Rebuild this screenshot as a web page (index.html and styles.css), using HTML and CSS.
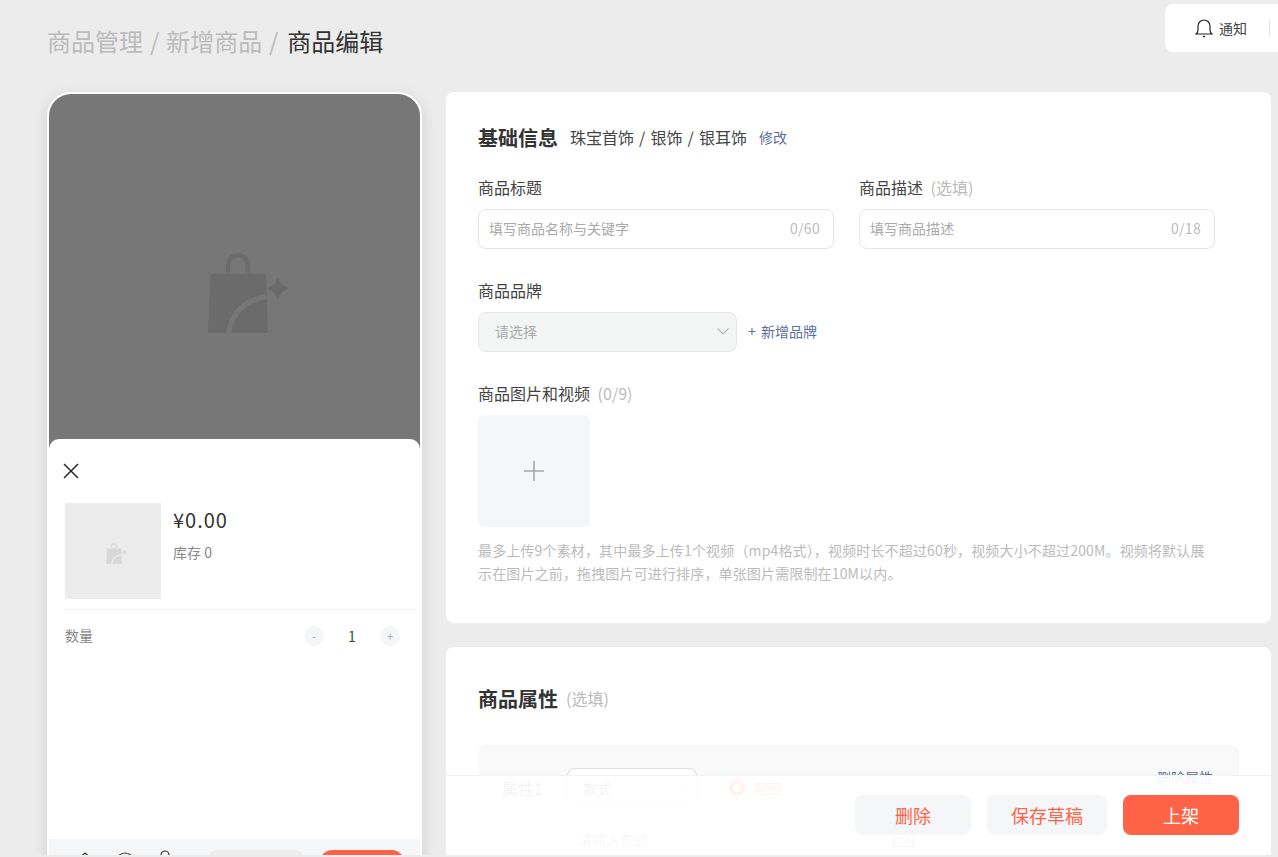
FILE: index.html
```html
<!DOCTYPE html>
<html lang="zh-CN">
<head>
  <meta charset="UTF-8">
  <meta name="viewport" content="width=device-width, initial-scale=1.0">
  <title>商品编辑</title>
  <link rel="stylesheet" href="styles.css">
</head>
<body>
  <svg class="defs" width="0" height="0">
    <symbol id="bag" viewBox="0 0 80 80">
      <path class="bag-fill" d="M18 21v-8a12.500 12.500 0 0 1 25 0v8h-5.500v-8a7 7 0 0 0-14 0v8z"/>
      <path class="bag-fill" d="M6 21h50a3 3 0 0 1 3 3l1.500 54a3 3 0 0 1-3 3H3.500a3 3 0 0 1-3-3L3 24a3 3 0 0 1 3-3z"/>
      <path class="bag-cut" d="M21 83c2-24 18-36 38-39"/>
      <path class="bag-star" d="M70 27q2 7 9 9q-7 2-9 9q-2-7-9-9q7-2 9-9z"/>
    </symbol>
  </svg>

  <div class="page">
    <!-- Breadcrumb -->
    <div class="crumbs">商品管理 / 新增商品 / <span class="crumbs-current">商品编辑</span></div>

    <div class="columns">
      <!-- Phone preview -->
      <div class="phone">
        <div class="phone-image">
          <svg class="bag-big"><use href="#bag"/></svg>
        </div>
        <div class="sheet">
          <svg class="close-icon" width="16" height="16" viewBox="0 0 16 16" fill="none" stroke="#222" stroke-width="1.400">
            <line x1="1" y1="1" x2="15" y2="15"></line>
            <line x1="15" y1="1" x2="1" y2="15"></line>
          </svg>
          <div class="sku">
            <div class="sku-thumb">
              <svg class="bag-small"><use href="#bag"/></svg>
            </div>
            <div>
              <div class="sku-price">¥0.00</div>
              <div class="sku-stock">库存 0</div>
            </div>
          </div>
          <div class="qty">
            <span class="qty-label">数量</span>
            <div class="qty-stepper">
              <span class="qty-btn">-</span>
              <span class="qty-value">1</span>
              <span class="qty-btn">+</span>
            </div>
          </div>
        </div>
        <div class="phone-bar">
          <svg class="bar-icons" width="96" height="16" viewBox="0 0 96 16" fill="none" stroke="#333" stroke-width="1.200">
            <path d="M0 11 8 4l8 7"/>
            <circle cx="48" cy="13" r="9"/>
            <circle cx="88" cy="6" r="4"/>
          </svg>
          <span class="bar-pill"></span>
          <span class="bar-buy"></span>
        </div>
      </div>

      <!-- Form cards -->
      <div class="cards">
        <section class="card card-basic">
          <div class="card-head">
            <h2 class="card-title">基础信息</h2>
            <span class="cat-path">珠宝首饰 / 银饰 / 银耳饰</span>
            <a class="link-edit">修改</a>
          </div>

          <div class="field-row">
            <div class="field">
              <div class="field-label">商品标题</div>
              <div class="input">
                <span>填写商品名称与关键字</span>
                <span class="input-count">0/60</span>
              </div>
            </div>
            <div class="field">
              <div class="field-label">商品描述 <span class="optional">(选填)</span></div>
              <div class="input">
                <span>填写商品描述</span>
                <span class="input-count">0/18</span>
              </div>
            </div>
          </div>

          <div class="field field-brand">
            <div class="field-label">商品品牌</div>
            <div class="brand-row">
              <div class="select-box">
                <span>请选择</span>
                <svg width="12" height="7" viewBox="0 0 12 7" fill="none" stroke="#b5b5b5" stroke-width="1.100">
                  <path d="M.5.5 6 6 11.500.5"/>
                </svg>
              </div>
              <a class="link-add">+ 新增品牌</a>
            </div>
          </div>

          <div class="field field-media">
            <div class="field-label">商品图片和视频 <span class="optional">(0/9)</span></div>
            <div class="upload">
              <svg width="22" height="22" viewBox="0 0 22 22" stroke="#999" stroke-width="1.300">
                <line x1="11" y1="1" x2="11" y2="21"></line>
                <line x1="1" y1="11" x2="21" y2="11"></line>
              </svg>
            </div>
            <p class="help">最多上传9个素材，其中最多上传1个视频（mp4格式），视频时长不超过60秒，视频大小不超过200M。视频将默认展<br>示在图片之前，拖拽图片可进行排序，单张图片需限制在10M以内。</p>
          </div>
        </section>

        <section class="card card-attrs">
          <div class="card-head">
            <h2 class="card-title">商品属性</h2>
            <span class="head-note">(选填)</span>
          </div>
          <div class="attr-panel">
            <div class="attr-row">
              <span class="attr-name">属性1</span>
              <div class="attr-select">
                <span>款式</span>
                <svg width="10" height="6" viewBox="0 0 10 6" fill="none" stroke="#b5b5b5">
                  <path d="M.5.500 5 5 9.500.5"/>
                </svg>
              </div>
              <span class="attr-radio"></span>
              <span class="attr-pic">配图</span>
              <a class="attr-del">删除属性</a>
            </div>
            <div class="attr-values">
              <span>请输入款式</span>
              <svg width="21" height="16" viewBox="0 0 21 16" fill="none" stroke="#888">
                <rect x=".5" y=".5" width="20" height="15"></rect>
                <path d="M.5 11l6-5 5 4 3-2 6 4"/>
              </svg>
            </div>
          </div>
        </section>
      </div>
    </div>

    <!-- Floating bits -->
    <div class="notice">
      <svg width="18" height="20" viewBox="0 0 18 20" fill="none" stroke="#222" stroke-width="1.200">
        <path d="M1 16c1.500-1 2-2 2-4V8a6 6 0 0 1 12 0v4c0 2 .5 3 2 4z"/>
        <path d="M8 18.500h2" stroke-width="1.500"/>
      </svg>
      <span class="notice-text">通知</span>
      <span class="notice-line"></span>
    </div>

    <div class="footer-bar">
      <button class="btn btn-light btn-del">删除</button>
      <button class="btn btn-light btn-draft">保存草稿</button>
      <button class="btn btn-main">上架</button>
    </div>
  </div>
</body>
</html>
```

FILE: styles.css
```css
/* Reset and base */
* {
  margin: 0;
  padding: 0;
  box-sizing: border-box;
}

html, body {
  height: 100%;
  overflow: hidden;
}

body {
  background-color: #ececec;
  color: #333;
  font-family: "Noto Sans CJK SC", "Noto Sans", sans-serif;
}

.defs {
  position: absolute;
}

.bag-fill {
  fill: currentColor;
}

.bag-star {
  fill: currentColor;
  stroke: currentColor;
  stroke-width: 2;
  stroke-linejoin: round;
}

.bag-cut {
  fill: none;
  stroke-width: 5;
}

.page {
  position: relative;
  height: 855px;
  overflow: hidden;
  padding-left: 47px;
}

/* Breadcrumb */
.crumbs {
  height: 92px;
  padding-top: 23px;
  font-size: 24px;
  line-height: 36px;
  word-spacing: 1.500px;
  color: #bbb;
}

.crumbs-current {
  margin-left: 2px;
  color: #333;
}

.columns {
  display: flex;
  gap: 24px;
  align-items: flex-start;
}

/* Phone preview */
.phone {
  width: 375px;
  height: 785px;
  flex-shrink: 0;
  display: flex;
  flex-direction: column;
  position: relative;
  background-color: #fff;
  border: 2px solid #fff;
  border-radius: 24px;
  box-shadow: 0 4px 16px rgba(0, 0, 0, 0.12);
  overflow: hidden;
}

.phone-image {
  height: 360px;
  flex-shrink: 0;
  padding: 158px 0 0 158px;
  background-color: #777;
  color: #6b6b6b;
}

.bag-big {
  display: block;
  width: 81px;
  height: 81px;
  stroke: #777;
}

.sheet {
  flex: 1;
  margin-top: -15px;
  position: relative;
  padding: 0 4px 0 16px;
  background-color: #fff;
  border-radius: 10px 10px 0 0;
}

.close-icon {
  display: block;
  margin: 24px 0 24px -2px;
}

.sku {
  display: flex;
  gap: 12px;
  padding-bottom: 10px;
  border-bottom: 1px solid #f2f2f2;
}

.sku-thumb {
  width: 96px;
  height: 96px;
  display: flex;
  align-items: center;
  justify-content: center;
  background-color: #ececec;
  color: #d8d8d8;
}

.bag-small {
  width: 21px;
  height: 21px;
  stroke: #ececec;
  margin: 5px 0 0 6px;
}

.sku-price {
  font-size: 20px;
  line-height: 28px;
  margin-top: 3px;
  letter-spacing: 1px;
}

.sku-stock {
  font-size: 14px;
  line-height: 20px;
  margin-top: 8px;
  color: #888;
}

.qty {
  display: flex;
  align-items: center;
  justify-content: space-between;
  padding: 15px 16px 0 0;
}

.qty-label {
  padding-bottom: 2px;
  font-size: 14px;
  color: #888;
}

.qty-stepper {
  display: flex;
  align-items: center;
  gap: 20px;
}

.qty-btn {
  width: 20px;
  height: 20px;
  border-radius: 50%;
  background-color: #f5f6f8;
  color: #aaa;
  font-size: 12px;
  line-height: 20px;
  text-align: center;
}

.qty-value {
  width: 16px;
  font-size: 14px;
  text-align: center;
  color: #444;
}

.phone-bar {
  height: 36px;
  flex-shrink: 0;
  display: flex;
  align-items: flex-start;
  padding: 11px 16px 0 28px;
  background-color: #f5f6f8;
}

.bar-icons {
  display: block;
  margin-top: -1px;
}

.bar-pill {
  width: 100px;
  height: 24px;
  margin-left: 33px;
  border-radius: 12px;
  background-color: #eeeeee;
}

.bar-buy {
  width: 84px;
  height: 24px;
  margin-left: 14px;
  border-radius: 12px;
  background-color: #ff6347;
}

/* Cards */
.cards {
  width: 825px;
  flex-shrink: 0;
  display: flex;
  flex-direction: column;
  gap: 24px;
}

.card {
  background-color: #fff;
  border-radius: 8px;
  padding: 30px 32px;
}

.card-basic {
  height: 531px;
}

.card-attrs {
  height: 400px;
  padding-top: 36px;
}

.card-head {
  display: flex;
  align-items: center;
  height: 30px;
}

.card-title {
  font-size: 20px;
  font-weight: 700;
  color: #333;
  margin-right: 8px;
}

.cat-path {
  margin-left: 4px;
  font-size: 16px;
  word-spacing: 1.500px;
  color: #444;
  margin-right: 12px;
}

.link-edit {
  font-size: 14px;
  color: #5b6f9e;
}

.head-note {
  font-size: 16px;
  color: #bbb;
}

.optional {
  margin-left: 4px;
  font-size: 16px;
  color: #bbb;
}

/* Form fields */
.field-row {
  display: flex;
  gap: 25px;
  margin-top: 23px;
}

.field {
  width: 356px;
}

.field-label {
  font-size: 16px;
  line-height: 24px;
  margin-bottom: 10px;
  color: #444;
}

.input {
  height: 40px;
  display: flex;
  align-items: center;
  justify-content: space-between;
  padding: 0 13px 2px 10px;
  border: 1px solid #e6e6e6;
  border-radius: 8px;
  font-size: 14px;
  color: #aaa;
}

.input-count {
  font-size: 14px;
  letter-spacing: 0.300px;
  color: #bbb;
}

.field-brand {
  width: auto;
  margin-top: 29px;
}

.brand-row {
  display: flex;
  align-items: center;
  gap: 11px;
}

.select-box {
  width: 259px;
  height: 40px;
  display: flex;
  align-items: center;
  justify-content: space-between;
  padding: 0 7px 2px 16px;
  background-color: #f4f6f5;
  border: 1px solid #e6e6e6;
  border-radius: 8px;
  font-size: 14px;
  color: #aaa;
}

.link-add {
  padding-bottom: 2px;
  font-size: 14px;
  word-spacing: 2px;
  color: #5b6f9e;
}

.field-media {
  width: auto;
  margin-top: 29px;
}

.upload {
  width: 112px;
  height: 112px;
  display: flex;
  align-items: center;
  justify-content: center;
  background-color: #f5f6f8;
  border-radius: 6px;
}

.help {
  margin-top: 12px;
  font-size: 14px;
  line-height: 23px;
  letter-spacing: 0.150px;
  color: #bbb;
  white-space: nowrap;
}

/* Attribute panel */
.attr-panel {
  margin-top: 32px;
  width: 761px;
  height: 200px;
  padding: 23px 26px 0 24px;
  background-color: #f9f9f9;
  border-radius: 8px;
}

.attr-row {
  display: flex;
  align-items: center;
  font-size: 14px;
}

.attr-name {
  width: 65px;
  font-size: 16px;
  color: #666;
}

.attr-select {
  width: 130px;
  height: 40px;
  display: flex;
  align-items: center;
  justify-content: space-between;
  padding: 0 8px 0 15px;
  background-color: #fff;
  border: 1px solid #ddd;
  border-radius: 8px;
  color: #666;
}

.attr-radio {
  width: 16px;
  height: 16px;
  margin-left: 32px;
  border: 4px solid #ff6347;
  border-radius: 50%;
  background-color: #fff;
}

.attr-pic {
  margin-left: 9px;
  color: #ff6347;
}

.attr-del {
  margin-left: auto;
  margin-top: -22px;
  font-size: 14px;
  color: #5b6f9e;
}

.attr-values {
  display: flex;
  align-items: center;
  gap: 245px;
  margin: 21px 0 0 76px;
  font-size: 14px;
  color: #999;
}

/* Overlays */
.notice {
  position: absolute;
  top: 4px;
  right: 0;
  width: 113px;
  height: 48px;
  display: flex;
  align-items: center;
  padding: 0 0 1px 30px;
  background-color: #fff;
  border-radius: 8px 0 0 8px;
}

.notice-text {
  margin-left: 6px;
  font-size: 14px;
  color: #444;
}

.notice-line {
  width: 1px;
  height: 16px;
  margin-left: 22px;
  background-color: #e5e5e5;
}

.footer-bar {
  position: absolute;
  left: 446px;
  width: 825px;
  bottom: 0;
  height: 80px;
  display: flex;
  gap: 16px;
  padding: 19px 32px 0 409px;
  background-color: rgba(255, 255, 255, 0.92);
  border-top: 1px solid #f3f3f3;
}

.btn {
  height: 40px;
  border: none;
  border-radius: 8px;
  font-family: inherit;
  font-size: 18px;
}

.btn-light {
  background-color: #f5f6f8;
  color: #ff6347;
}

.btn-del {
  width: 116px;
}

.btn-draft {
  width: 120px;
}

.btn-main {
  width: 116px;
  background-color: #ff6347;
  color: #fff;
}
```
